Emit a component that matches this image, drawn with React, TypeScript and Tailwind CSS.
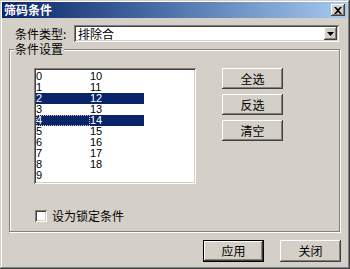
import React from 'react';

const raised =
  'shadow-[inset_-1px_-1px_#404040,inset_1px_1px_#ffffff,inset_-2px_-2px_#808080,inset_2px_2px_#d4d0c8]';
const sunken =
  'shadow-[inset_1px_1px_#808080,inset_-1px_-1px_#ffffff,inset_2px_2px_#404040,inset_-2px_-2px_#d4d0c8]';

const cjk = "font-['SimSun','Noto_Sans_CJK_SC',sans-serif]";

const Btn = ({ label, isDefault }: { label: string; isDefault?: boolean }) => (
  <button
    className={`flex items-center justify-center bg-[#d4d0c8] text-[12px] leading-none text-black ${cjk} ${
      isDefault ? 'border border-black w-[61px] h-[22px]' : 'w-[61px] h-[22px]'
    }`}
  >
    <span className={`w-full h-full flex items-center justify-center ${raised}`}>{label}</span>
  </button>
);

const SideBtn = ({ label }: { label: string }) => (
  <button
    className={`w-[61px] h-[21px] flex items-center justify-center bg-[#d4d0c8] text-[12px] leading-none text-black ${cjk} ${raised}`}
  >
    {label}
  </button>
);

export default function App() {
  const left = Array.from({ length: 10 }, (_, i) => i);
  const right = Array.from({ length: 9 }, (_, i) => i + 10);
  const selected = [2, 4, 12, 14];

  const Cell = ({ n }: { n: number }) => {
    const sel = selected.includes(n);
    return (
      <div
        className={`h-[11px] w-[54px] text-[11px] leading-[11px] ${
          sel ? 'bg-[#0a246a] text-white' : 'text-black'
        } ${n === 4 ? 'outline-1 outline-dotted outline-[#c8c8c8] -outline-offset-1' : ''}`}
      >
        {n}
      </div>
    );
  };

  return (
    <div
      className={`w-[350px] h-[269px] bg-[#d4d0c8] pt-[2px] pl-[2px] pr-[3px] flex flex-col ${cjk} shadow-[inset_-1px_-1px_#404040,inset_1px_1px_#d4d0c8,inset_-2px_-2px_#808080,inset_2px_2px_#ffffff]`}
    >
      {/* title bar */}
      <div className="h-[16px] flex items-center justify-between bg-gradient-to-r from-[#0a246a] to-[#a6caf0] pl-[2px] pr-[2px]">
        <span className="text-white font-bold text-[12px] leading-none">筛码条件</span>
        <div className={`w-[14px] h-[12px] bg-[#d4d0c8] flex items-center justify-center ${raised}`}>
          <svg width="8" height="7" viewBox="0 0 8 7">
            <path d="M0 0h2l2 2 2-2h2L5 3.5 8 7H6L4 5 2 7H0l3-3.5z" fill="#000" />
          </svg>
        </div>
      </div>

      {/* combo row */}
      <div className="mt-[7px] flex items-center h-[17px]">
        <span className="ml-[13px] w-[59px] text-[12px] leading-none text-black">条件类型:</span>
        <div className={`w-[265px] h-[17px] bg-white flex items-center justify-between p-[2px] ${sunken}`}>
          <span className="pl-[2px] text-[12px] leading-none text-black">排除合</span>
          <div className={`w-[13px] h-[13px] bg-[#d4d0c8] flex items-center justify-center ${raised}`}>
            <svg width="7" height="4" viewBox="0 0 7 4">
              <path d="M0 0h7L3.5 4z" fill="#000" />
            </svg>
          </div>
        </div>
      </div>

      {/* group box */}
      <div className="relative mt-[7px] ml-[7px] w-[331px] h-[183px] border border-[#808080] shadow-[inset_1px_1px_#ffffff,1px_1px_#ffffff]">
        <span className="absolute left-[4px] -top-[8px] px-[1px] bg-[#d4d0c8] text-[12px] leading-[14px] text-black">
          条件设置
        </span>
        <div className="flex mt-[18px] ml-[24px]">
          <div className={`w-[162px] h-[116px] bg-white pl-[2px] pt-[3px] ${sunken}`}>
            <div className="flex font-['Liberation_Sans',Arial,sans-serif]">
              <div className="flex flex-col">
                {left.map((n) => (
                  <Cell key={n} n={n} />
                ))}
              </div>
              <div className="flex flex-col">
                {right.map((n) => (
                  <Cell key={n} n={n} />
                ))}
              </div>
            </div>
          </div>
          <div className="ml-[26px] flex flex-col gap-[5px]">
            <SideBtn label="全选" />
            <SideBtn label="反选" />
            <SideBtn label="清空" />
          </div>
        </div>
        <div className="flex items-center mt-[26px] ml-[25px]">
          <div className={`w-[12px] h-[12px] bg-white ${sunken}`} />
          <span className="ml-[5px] text-[12px] leading-none text-black">设为锁定条件</span>
        </div>
      </div>

      {/* bottom buttons */}
      <div className="mt-[8px] flex justify-end gap-[16px] pr-[6px]">
        <Btn label="应用" isDefault />
        <Btn label="关闭" />
      </div>
    </div>
  );
}
